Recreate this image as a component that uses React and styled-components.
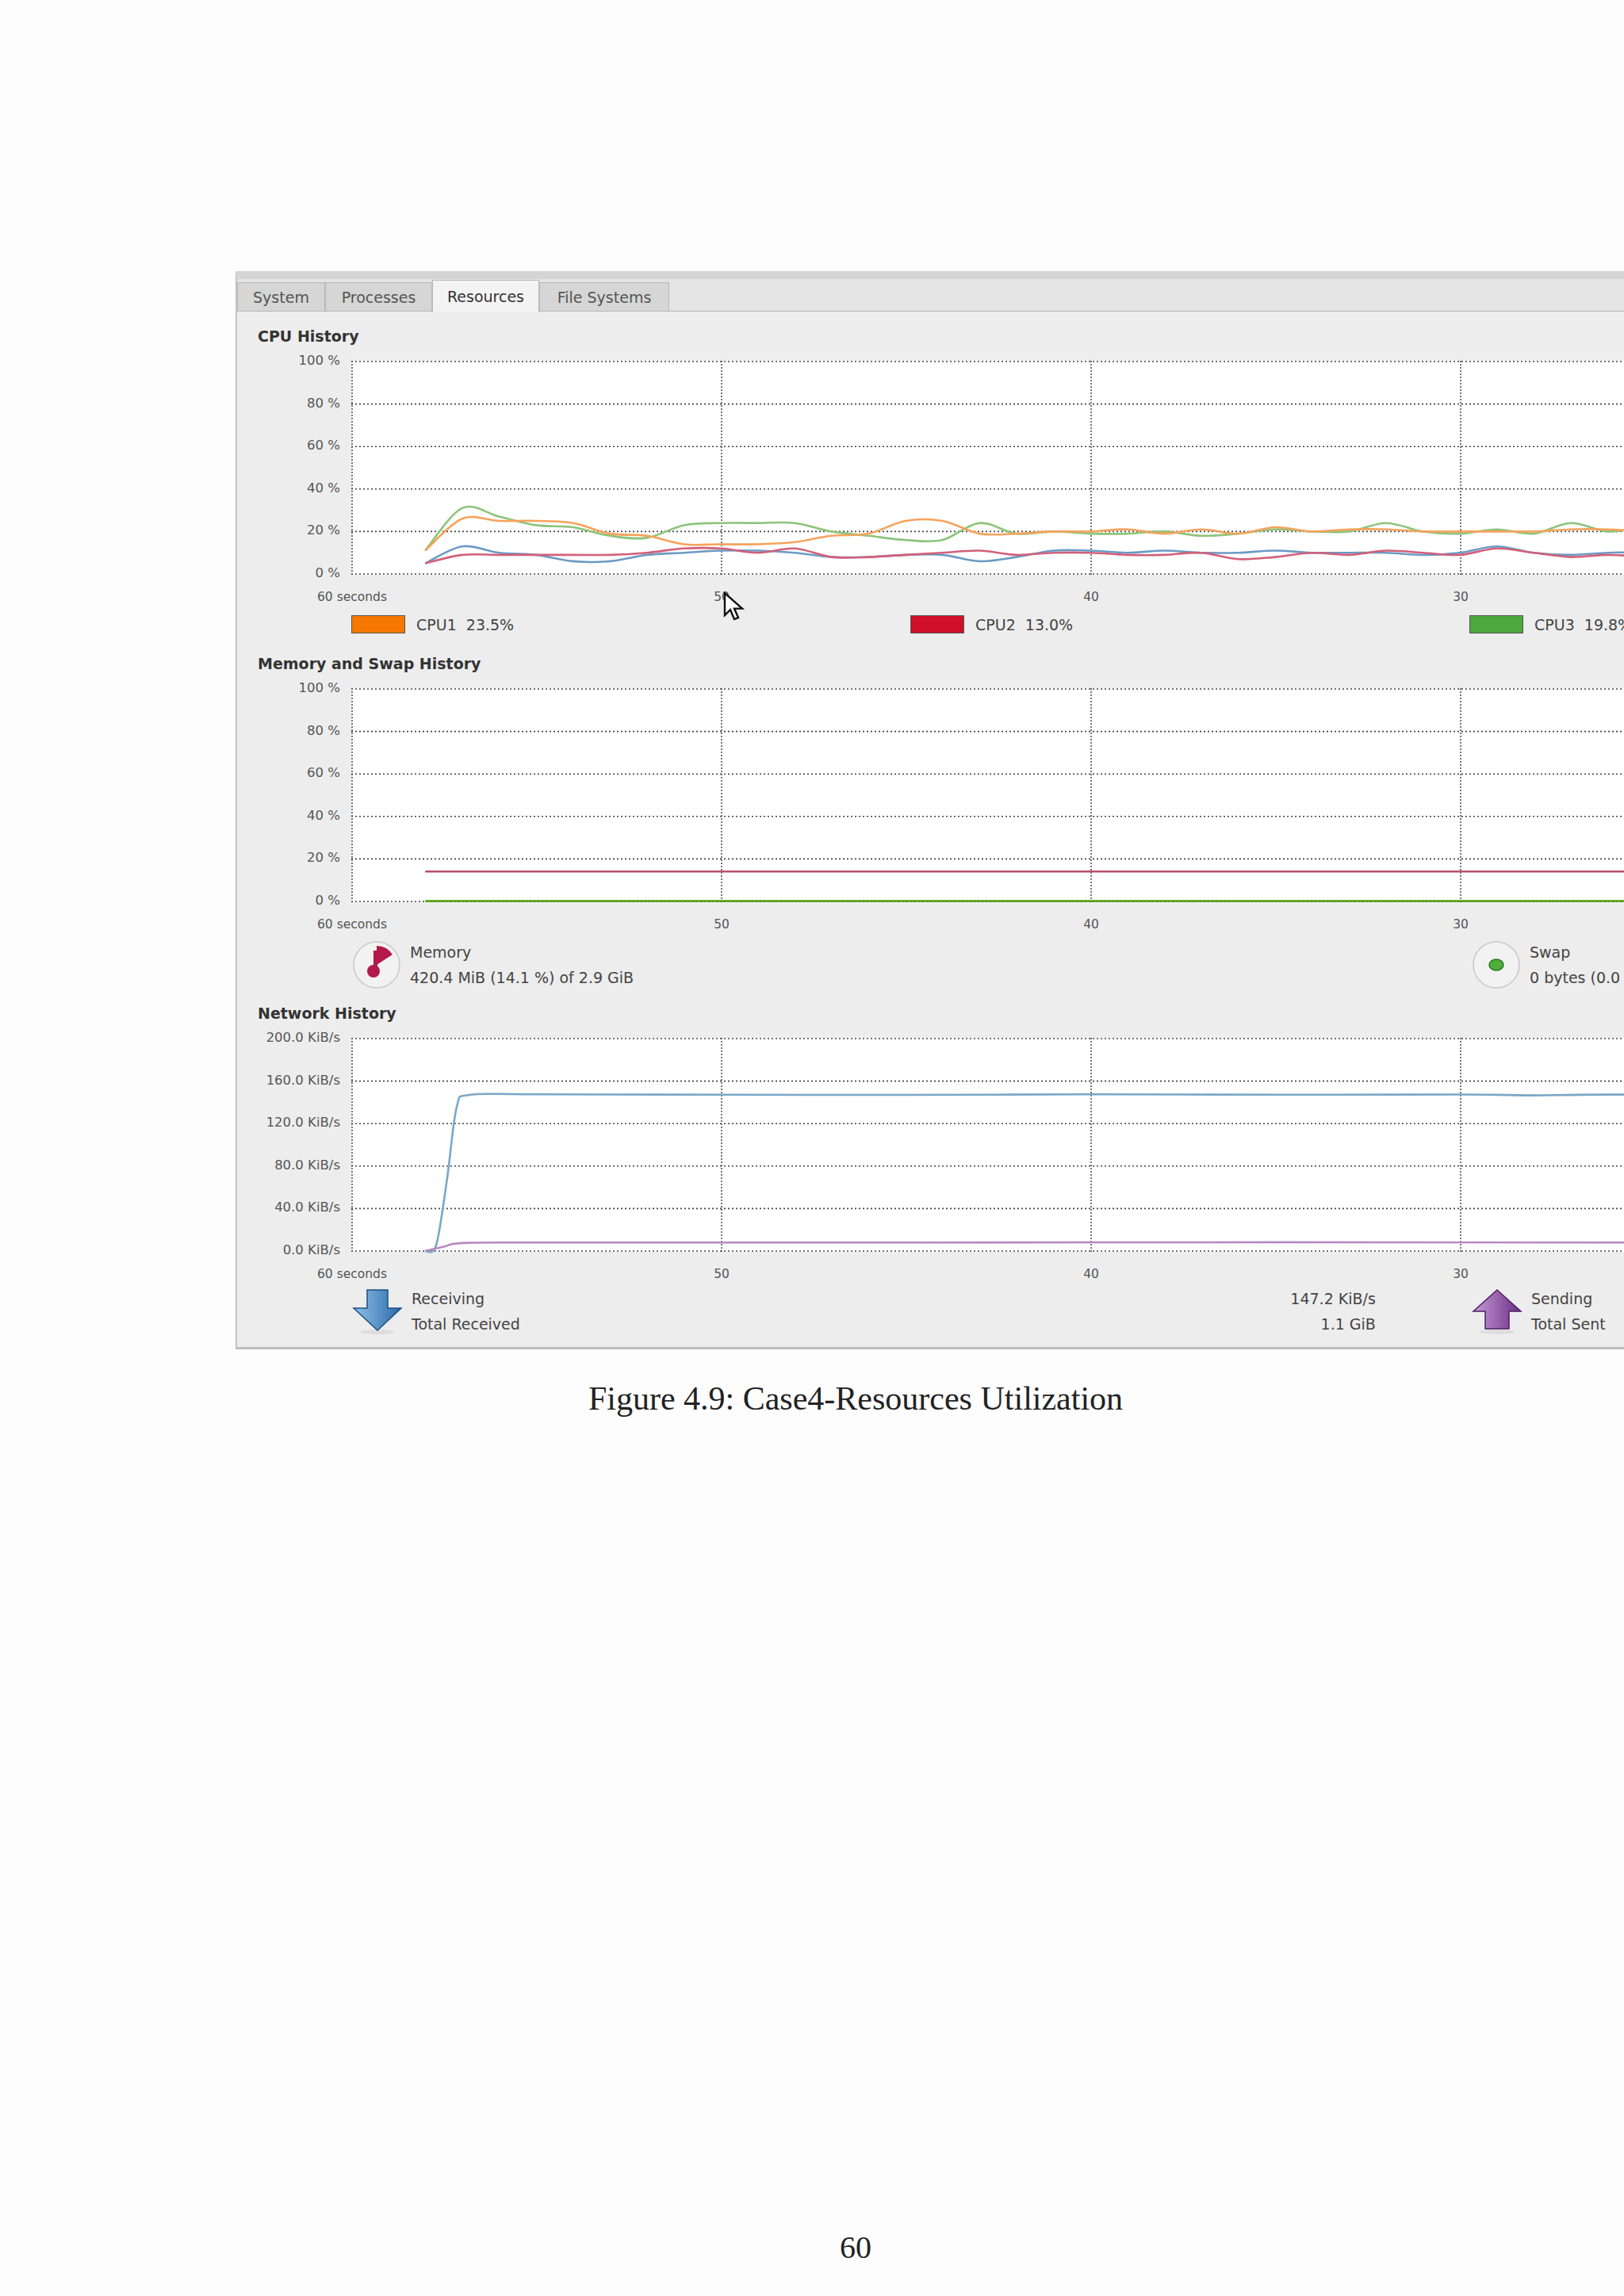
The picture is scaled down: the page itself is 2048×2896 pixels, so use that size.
import React from 'react'
import styled, { createGlobalStyle } from 'styled-components'

const Global = createGlobalStyle`
  html, body { margin: 0; padding: 0; background: #fdfdfd; overflow-x: hidden; }
  body { font-family: "DejaVu Sans", "Liberation Sans", sans-serif; }
`

const SEC = 46.6
const PLOT_W = 2796

const Page = styled.div`
  width: 2048px;
  height: 2896px;
  overflow: hidden;
  position: relative;
  display: flex;
  flex-direction: column;
  padding-top: 342px;
  box-sizing: border-box;
`

const Panel = styled.div`
  margin-left: 297px;
  width: 3100px;
  background: #ededed;
  border-top: 10px solid #d4d4d4;
  border-left: 2px solid #c4c4c4;
  border-bottom: 3px solid #bdbdbd;
  display: flex;
  flex-direction: column;
  padding-bottom: 15px;
`

const TabBar = styled.div`
  display: flex;
  align-items: flex-end;
  height: 40px;
  border-bottom: 1px solid #b8b8b8;
  background: #e4e4e4;
`

const Tab = styled.div`
  height: ${p => (p.$active ? 40 : 36)}px;
  width: ${p => p.$w}px;
  box-sizing: border-box;
  display: flex;
  align-items: center;
  justify-content: center;
  font-size: 19px;
  color: ${p => (p.$active ? '#333' : '#555')};
  background: ${p => (p.$active ? '#f3f3f3' : '#d6d6d6')};
  border: 1px solid #b9b9b9;
  border-bottom: none;
  margin-bottom: ${p => (p.$active ? -1 : 0)}px;
`

const Section = styled.div`
  display: flex;
  flex-direction: column;
  padding-left: 26px;
  margin-top: ${p => p.$top}px;
`

const Title = styled.div`
  font-size: 19px;
  font-weight: bold;
  color: #333;
  margin-bottom: 20px;
`

const ChartRow = styled.div`
  display: flex;
  align-items: flex-start;
`

const YAxis = styled.div`
  width: 104px;
  padding-right: 14px;
  height: ${p => p.$h + 18}px;
  margin-top: -9px;
  display: flex;
  flex-direction: column;
  justify-content: space-between;
  align-items: flex-end;
  font-size: 16.5px;
  line-height: 18px;
  color: #555;
  white-space: nowrap;
`

const XAxis = styled.div`
  display: flex;
  margin-left: 1px;
  margin-top: 12px;
  font-size: 15.5px;
  color: #555;
`

const XTick = styled.div`
  width: ${SEC * 10}px;
  text-align: center;
  flex-shrink: 0;
`

const Legend = styled.div`
  display: flex;
  margin-left: 118px;
  margin-top: ${p => p.$top || 14}px;
`

const CpuItem = styled.div`
  width: 705px;
  flex-shrink: 0;
  display: flex;
  align-items: center;
  gap: 14px;
  font-size: 19px;
  color: #444;
  white-space: pre;
`

const Swatch = styled.div`
  width: 66px;
  height: 21px;
  background: ${p => p.$c};
  border: 1px solid #555;
`

const InfoItem = styled.div`
  width: ${p => p.$w}px;
  flex-shrink: 0;
  display: flex;
  align-items: center;
  gap: 10px;
  font-size: 19px;
  color: #444;
`

const InfoText = styled.div`
  display: flex;
  flex-direction: column;
  gap: 8px;
  line-height: 24px;
  white-space: nowrap;
  text-align: ${p => p.$align || 'left'};
  width: ${p => (p.$w ? p.$w + 'px' : 'auto')};
`

const Caption = styled.div`
  font-family: "Liberation Serif", "DejaVu Serif", serif;
  font-size: 42px;
  color: #222;
  width: 2048px;
  padding-left: 110px;
  box-sizing: border-box;
  text-align: center;
  margin-top: 38px;
`

const PageNumber = styled.div`
  font-family: "Liberation Serif", serif;
  font-size: 40px;
  color: #222;
  text-align: center;
  padding-left: 110px;
  margin-top: auto;
  margin-bottom: 38px;
`

const Cursor = styled.svg`
  position: absolute;
  left: 912px;
  top: 746px;
`

function path(points, h, max) {
  const p = points.map(([a, v]) => [(60 - a) * SEC, h - (v / max) * h])
  let d = `M${p[0][0].toFixed(1)},${p[0][1].toFixed(1)}`
  for (let i = 0; i < p.length - 1; i++) {
    const p0 = p[i - 1] || p[i]
    const p1 = p[i]
    const p2 = p[i + 1]
    const p3 = p[i + 2] || p2
    const c1 = [p1[0] + (p2[0] - p0[0]) / 6, p1[1] + (p2[1] - p0[1]) / 6]
    const c2 = [p2[0] - (p3[0] - p1[0]) / 6, p2[1] - (p3[1] - p1[1]) / 6]
    d += ` C${c1[0].toFixed(1)},${c1[1].toFixed(1)} ${c2[0].toFixed(1)},${c2[1].toFixed(1)} ${p2[0].toFixed(1)},${p2[1].toFixed(1)}`
  }
  return d
}

function series(start, base, amp, seed) {
  const out = start.map((v, i) => [58 - i, v])
  for (let a = 58 - start.length; a >= 0; a--) {
    out.push([a, base + amp * Math.sin(a * 1.3 + seed) * Math.cos(a * 0.7 + seed * 2)])
  }
  return out
}

const cpu = [
  { c: '#8cc47a', d: series([11, 31, 27, 23, 22, 18, 17, 23, 24, 24, 24, 20, 18, 16, 16, 24, 19, 20, 19, 19, 20, 18, 19, 21, 20, 20, 24, 20, 19, 21, 19, 24, 20], 20, 3, 1) },
  { c: '#f5a35c', d: series([11, 26, 25, 25, 24, 19, 18, 14, 14, 14, 15, 18, 19, 25, 25, 19, 19, 20, 20, 21, 19, 21, 19, 22, 20, 21, 21, 20, 20, 20, 20, 21, 21], 20, 2, 2) },
  { c: '#6b9bc4', d: series([5, 13, 10, 9, 6, 6, 9, 10, 11, 11, 10, 8, 8, 9, 9, 6, 8, 11, 11, 10, 11, 10, 10, 11, 10, 10, 10, 9, 10, 13, 10, 9, 10], 10, 2, 3) },
  { c: '#d2607a', d: series([5, 9, 9, 9, 9, 9, 10, 12, 12, 10, 12, 8, 8, 9, 10, 11, 9, 10, 10, 9, 9, 10, 7, 8, 10, 9, 11, 10, 9, 12, 10, 8, 9], 10, 2, 4) },
]

const flat = (v, from = 58) => [[from, v], [30, v], [0, v]]

const net = [
  { c: '#7aa7c7', d: [[58, 0], [57.7, 6], [57.4, 70], [57.15, 135], [56.8, 147], [55, 147.5], [50, 147.2], [45, 147], [40, 147.5], [35, 147.2], [30, 147.4], [28, 146.6], [26, 147.3], [20, 147], [10, 147.2], [0, 147]] },
  { c: '#b58ac2', d: [[58, 0], [57.5, 4], [57, 7.5], [55, 8], [45, 8], [35, 8.3], [25, 8], [0, 8]] },
]

function Plot({ h, max, rows, lines }) {
  const ticks = [10, 20, 30, 40, 50]
  return (
    <svg width={PLOT_W} height={h + 2} style={{ display: 'block', background: '#fff', overflow: 'visible' }}>
      {Array.from({ length: rows + 1 }, (_, i) => (
        <line key={i} x1="0" x2={PLOT_W} y1={1 + (h * i) / rows} y2={1 + (h * i) / rows} stroke="#444" strokeWidth="1.6" strokeDasharray="2 3" />
      ))}
      {[60, ...ticks].map(a => (
        <line key={a} x1={(60 - a) * SEC + 1} x2={(60 - a) * SEC + 1} y1="0" y2={h + 2} stroke="#555" strokeWidth="1.6" strokeDasharray="2 2" />
      ))}
      {lines.map((l, i) => (
        <path key={i} d={path(l.d, h, max)} transform="translate(0,1)" fill="none" stroke={l.c} strokeWidth="2.6" />
      ))}
    </svg>
  )
}

function Chart({ h, max, labels, lines }) {
  return (
    <>
      <ChartRow>
        <YAxis $h={h}>
          {labels.map(l => <span key={l}>{l}</span>)}
        </YAxis>
        <Plot h={h} max={max} rows={labels.length - 1} lines={lines} />
      </ChartRow>
      <XAxis>
        <XTick style={{ marginLeft: 118 - SEC * 5 }}>60 seconds</XTick>
        {[50, 40, 30, 20, 10].map(t => <XTick key={t}>{t}</XTick>)}
      </XAxis>
    </>
  )
}

const pct = ['100 %', '80 %', '60 %', '40 %', '20 %', '0 %']

const PieIcon = ({ color, full }) => (
  <svg width="64" height="64" viewBox="0 0 64 64">
    <circle cx="32" cy="32" r="29" fill="#f2f2f2" stroke="#c8c8c8" strokeWidth="1.5" />
    {full ? (
      <>
        <path d="M32 32 L32 8 A24 24 0 0 1 52 19 Z" fill={color} />
        <circle cx="28" cy="40" r="8" fill={color} />
        <rect x="28" y="14" width="5" height="26" fill={color} />
      </>
    ) : (
      <ellipse cx="32" cy="32" rx="9" ry="7" fill={color} stroke="#2f7a22" strokeWidth="1.5" />
    )}
  </svg>
)

const Arrow = ({ up }) => (
  <svg width="66" height="60" viewBox="0 0 66 60">
    <defs>
      <linearGradient id={up ? 'gu' : 'gd'} x1="0" x2="1">
        <stop offset="0" stopColor={up ? '#c89ad6' : '#8ec0e8'} />
        <stop offset="1" stopColor={up ? '#6a2f85' : '#2a6aa8'} />
      </linearGradient>
    </defs>
    <ellipse cx="33" cy="56" rx="22" ry="3" fill="#ddd" />
    {up ? (
      <path d="M33 3 L63 30 L48 30 L48 52 L18 52 L18 30 L3 30 Z" fill={`url(#gu)`} stroke="#4e2063" strokeWidth="1.5" />
    ) : (
      <path d="M20 3 L46 3 L46 26 L63 26 L33 54 L3 26 L20 26 Z" fill={`url(#gd)`} stroke="#1f4f80" strokeWidth="1.5" />
    )}
  </svg>
)

export default function App() {
  return (
    <Page>
      <Global />
      <Panel>
        <TabBar>
          <Tab $w={111}>System</Tab>
          <Tab $w={135}>Processes</Tab>
          <Tab $w={135} $active>Resources</Tab>
          <Tab $w={164}>File Systems</Tab>
        </TabBar>

        <Section $top={20}>
          <Title>CPU History</Title>
          <Chart h={268} max={100} labels={pct} lines={cpu} />
          <Legend>
            <CpuItem><Swatch $c="#f57900" />{'CPU1  23.5%'}</CpuItem>
            <CpuItem><Swatch $c="#d0102a" />{'CPU2  13.0%'}</CpuItem>
            <CpuItem><Swatch $c="#4ea83c" />{'CPU3  19.8%'}</CpuItem>
            <CpuItem><Swatch $c="#3465a4" />{'CPU4  9.8%'}</CpuItem>
          </Legend>
        </Section>

        <Section $top={27}>
          <Title>Memory and Swap History</Title>
          <Chart h={268} max={100} labels={pct} lines={[{ c: '#b8506a', d: flat(14.1) }, { c: '#4e9a06', d: flat(0.2) }]} />
          <Legend $top={10}>
            <InfoItem $w={1412}>
              <PieIcon color="#b3194a" full />
              <InfoText><span>Memory</span><span>420.4 MiB (14.1 %) of 2.9 GiB</span></InfoText>
            </InfoItem>
            <InfoItem $w={800}>
              <PieIcon color="#4caf3a" />
              <InfoText><span>Swap</span><span>0 bytes (0.0 %) of 3.0 GiB</span></InfoText>
            </InfoItem>
          </Legend>
        </Section>

        <Section $top={18}>
          <Title>Network History</Title>
          <Chart h={268} max={200} labels={['200.0 KiB/s', '160.0 KiB/s', '120.0 KiB/s', '80.0 KiB/s', '40.0 KiB/s', '0.0 KiB/s']} lines={net} />
          <Legend $top={8}>
            <InfoItem $w={1412}>
              <Arrow />
              <InfoText><span>Receiving</span><span>Total Received</span></InfoText>
              <InfoText $align="right" $w={1069}><span>147.2 KiB/s</span><span>1.1 GiB</span></InfoText>
            </InfoItem>
            <InfoItem $w={800}>
              <Arrow up />
              <InfoText><span>Sending</span><span>Total Sent</span></InfoText>
              <InfoText $align="right" $w={200}><span>8.1 KiB/s</span><span>52.4 MiB</span></InfoText>
            </InfoItem>
          </Legend>
        </Section>
      </Panel>

      <Caption>Figure 4.9: Case4-Resources Utilization</Caption>
      <PageNumber>60</PageNumber>

      <Cursor width="30" height="40" viewBox="0 0 15 20">
        <path d="M1 1 L1 15 L4.5 11.5 L7 17.5 L9.5 16.5 L7 10.8 L12 10.8 Z" fill="#fff" stroke="#111" strokeWidth="1.2" />
      </Cursor>
    </Page>
  )
}
